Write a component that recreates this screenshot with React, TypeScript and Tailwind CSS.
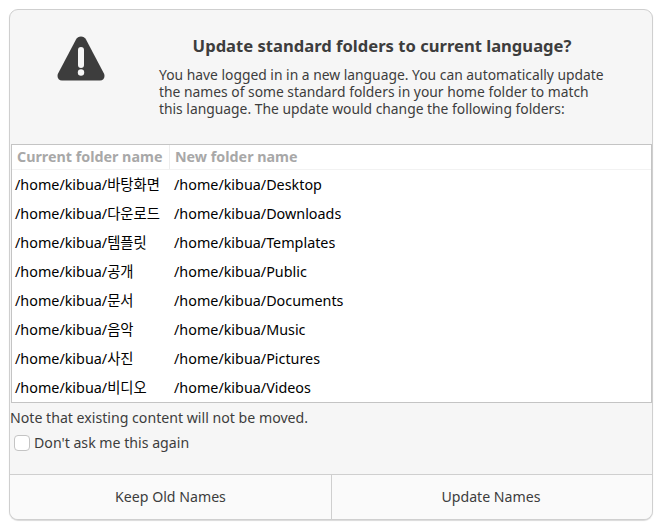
const rows = [
  ["/home/kibua/바탕화면", "/home/kibua/Desktop"],
  ["/home/kibua/다운로드", "/home/kibua/Downloads"],
  ["/home/kibua/템플릿", "/home/kibua/Templates"],
  ["/home/kibua/공개", "/home/kibua/Public"],
  ["/home/kibua/문서", "/home/kibua/Documents"],
  ["/home/kibua/음악", "/home/kibua/Music"],
  ["/home/kibua/사진", "/home/kibua/Pictures"],
  ["/home/kibua/비디오", "/home/kibua/Videos"],
];

export default function App() {
  return (
    <div className="h-[529px] w-[662px] bg-white pl-[9px] pt-[9px] text-[14.15px] text-[#3d3d3d] [font-family:'Noto_Sans','Noto_Sans_CJK_KR',sans-serif]">
      <div className="flex h-[511px] w-[644px] flex-col overflow-hidden rounded-[9px] border border-[#cfcfcf] bg-[#f6f6f6] shadow-[0_1px_1px_rgba(0,0,0,0.15)]">
        <div className="flex h-[134px] shrink-0">
          <div className="flex w-[149px] shrink-0 justify-center pt-[26px] pr-[7px]">
            <svg width="48" height="46" viewBox="0 0 48 46">
              <path
                d="M24 0.5c-2.2 0-3.9 1.2-5 3.1L1.2 37.2C-0.6 40.6 1.2 44.5 5 44.5h38c3.8 0 5.6-3.9 3.8-7.3L29 3.6C27.9 1.7 26.2 0.5 24 0.5z"
                fill="#3d3d3d"
              />
              <rect x="21" y="11" width="6" height="21" rx="3" fill="#f6f6f6" />
              <circle cx="24" cy="36.5" r="3.2" fill="#f6f6f6" />
            </svg>
          </div>
          <div className="min-w-0 flex-1 pt-[25px]">
            <h1 className="w-[446px] text-center text-[16.6px] leading-[22px] font-bold whitespace-nowrap">
              Update standard folders to current language?
            </h1>
            <p className="mt-[9px] text-[13.85px] leading-[17px] whitespace-nowrap">
              You have logged in in a new language. You can automatically update
              <br />
              the names of some standard folders in your home folder to match
              <br />
              this language. The update would change the following folders:
            </p>
          </div>
        </div>
        <div className="ml-px flex h-[259px] w-[642px] shrink-0 flex-col border border-r-2 border-[#c4c4c4] bg-white">
          <div className="flex h-[25px] shrink-0 items-center border-b border-[#f2f2f2] text-[14.3px] font-bold text-[#a8a8a8]">
            <div className="flex h-full w-[158px] shrink-0 items-center border-r border-[#ededed] pl-[5px] whitespace-nowrap">
              Current folder name
            </div>
            <div className="pl-[5px] whitespace-nowrap">New folder name</div>
          </div>
          {rows.map(([a, b]) => (
            <div key={b} className="flex h-[29px] shrink-0 items-center text-[14.35px] text-black">
              <div className="w-[162px] shrink-0 pl-[3px] whitespace-nowrap">{a}</div>
              <div className="whitespace-nowrap">{b}</div>
            </div>
          ))}
        </div>
        <div className="flex h-[72px] shrink-0 flex-col border-b border-[#cfcfcf]">
          <div className="mt-[5px] h-[20px] leading-[20px] whitespace-nowrap">
            Note that existing content will not be moved.
          </div>
          <label className="mt-[5px] ml-[4px] flex items-center gap-[4px]">
            <span className="h-[16px] w-[16px] rounded-[4px] border border-[#c4c4c4] bg-white" />
            <span className="leading-[20px]">Don't ask me this again</span>
          </label>
        </div>
        <div className="flex flex-1 bg-[#fafafa]">
          <div className="flex w-[322px] items-center justify-center border-r border-[#cfcfcf] pb-[1px]">
            Keep Old Names
          </div>
          <div className="flex flex-1 items-center justify-center pb-[1px] pr-[2px]">Update Names</div>
        </div>
      </div>
    </div>
  );
}
